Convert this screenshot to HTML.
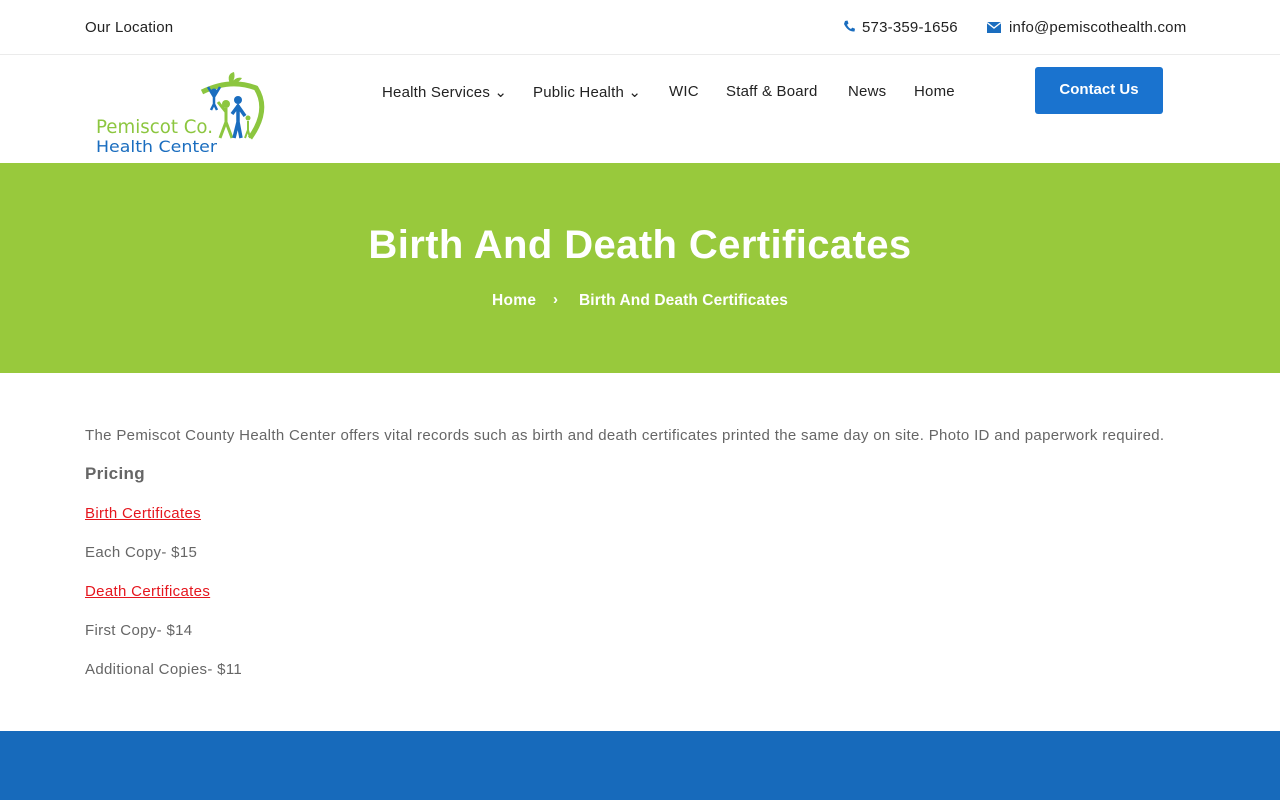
<!DOCTYPE html>
<html><head><meta charset="utf-8"><style>
*{margin:0;padding:0;box-sizing:border-box}
body{width:1280px;height:800px;overflow:hidden;font-family:"Liberation Sans",sans-serif;background:#fff;position:relative}
.a{position:absolute;white-space:nowrap}
.top{font-size:15px;color:#222;letter-spacing:0.2px;top:19px}
.nav{font-size:15px;color:#222;top:83px;letter-spacing:0.2px}
.p{font-size:15px;color:#666;left:85px;letter-spacing:0.33px}
</style></head><body>
<div class="a top" style="left:85px">Our Location</div>
<svg class="a" style="left:843px;top:20px" width="12" height="13" viewBox="0 0 12 13"><path d="M2 1 L4.5 0.5 L5.5 3.5 L4 4.8 Q5.5 8 8 9 L9.3 7.6 L12 8.8 L11.5 11.5 Q5 12 1 4 Z" fill="#1a6dbf"/></svg>
<div class="a top" style="left:862px">573-359-1656</div>
<svg class="a" style="left:987px;top:22px" width="14" height="11" viewBox="0 0 14 11"><rect width="14" height="11" fill="#1a6dbf"/><path d="M0 0.5 L7 6 L14 0.5" stroke="#fff" stroke-width="1.3" fill="none"/></svg>
<div class="a top" style="left:1009px">info@pemiscothealth.com</div>
<div class="a" style="left:0;top:54px;width:1280px;height:1px;background:#ebebeb"></div>
<svg class="a" style="left:90px;top:70px" width="180" height="88" viewBox="0 0 180 88">
<path d="M112 22 Q140 8 166 18 Q180 40 160 68" stroke="#8cc63f" stroke-width="5" fill="none"/>
<path d="M140 14 Q136 4 144 2 Q146 10 140 14Z M140 14 Q146 6 152 8 Q148 14 140 14Z" fill="#8cc63f"/>
<circle cx="124" cy="22" r="3.5" fill="#1a6dbf"/><path d="M118 17 L124 27 L130 17 M124 27 L124 34 M121 40 L124 34 L127 40" stroke="#1a6dbf" stroke-width="2.5" fill="none"/>
<circle cx="136" cy="34" r="4" fill="#8cc63f"/><path d="M136 38 L136 52 L130 68 M136 52 L142 68 M128 32 L136 42" stroke="#8cc63f" stroke-width="3" fill="none"/>
<circle cx="148" cy="30" r="4" fill="#1a6dbf"/><path d="M148 35 L148 52 L144 68 M148 52 L151 68 M142 44 L148 36 L155 46" stroke="#1a6dbf" stroke-width="3.5" fill="none"/>
<circle cx="158" cy="48" r="2.5" fill="#8cc63f"/><path d="M158 51 L158 60 L155 68 M158 60 L160 68" stroke="#8cc63f" stroke-width="2" fill="none"/>
<text x="6" y="63" font-family="DejaVu Sans,sans-serif" font-size="19" fill="#8cc63f" textLength="117" lengthAdjust="spacingAndGlyphs">Pemiscot Co.</text>
<text x="6" y="82" font-family="DejaVu Sans,sans-serif" font-size="16" fill="#1a6dbf" textLength="121" lengthAdjust="spacingAndGlyphs">Health Center</text>
</svg>
<div class="a nav" style="left:382px">Health Services ⌄</div>
<div class="a nav" style="left:533px">Public Health ⌄</div>
<div class="a nav" style="left:669px">WIC</div>
<div class="a nav" style="left:726px">Staff &amp; Board</div>
<div class="a nav" style="left:848px">News</div>
<div class="a nav" style="left:914px">Home</div>
<div class="a" style="left:1035px;top:67px;width:128px;height:47px;background:#1a73cf;border-radius:3px;color:#fff;font-weight:bold;font-size:15px;text-align:center;line-height:46px">Contact Us</div>
<div class="a" style="left:0;top:163px;width:1280px;height:210px;background:#98c93c"></div>
<div class="a" style="left:0;top:223px;width:1280px;text-align:center;color:#fff;font-weight:bold;font-size:40px;letter-spacing:0.4px">Birth And Death Certificates</div>
<div class="a" style="left:492px;top:292px;color:#fff;font-weight:bold;font-size:15.5px;letter-spacing:0.3px">Home</div>
<div class="a" style="left:553px;top:291px;color:#fff;font-weight:bold;font-size:15px">›</div>
<div class="a" style="left:579px;top:292px;color:#fff;font-weight:bold;font-size:15.5px;letter-spacing:0.1px">Birth And Death Certificates</div>
<div class="a p" style="top:427px">The Pemiscot County Health Center offers vital records such as birth and death certificates printed the same day on site. Photo ID and paperwork required.</div>
<div class="a p" style="top:464px;font-size:17px;font-weight:bold">Pricing</div>
<div class="a p" style="top:505px;color:#e5161e;text-decoration:underline">Birth Certificates</div>
<div class="a p" style="top:544px">Each Copy- $15</div>
<div class="a p" style="top:583px;color:#e5161e;text-decoration:underline">Death Certificates</div>
<div class="a p" style="top:622px">First Copy- $14</div>
<div class="a p" style="top:661px">Additional Copies- $11</div>
<div class="a" style="left:0;top:731px;width:1280px;height:69px;background:#176abb"></div>
</body></html>
